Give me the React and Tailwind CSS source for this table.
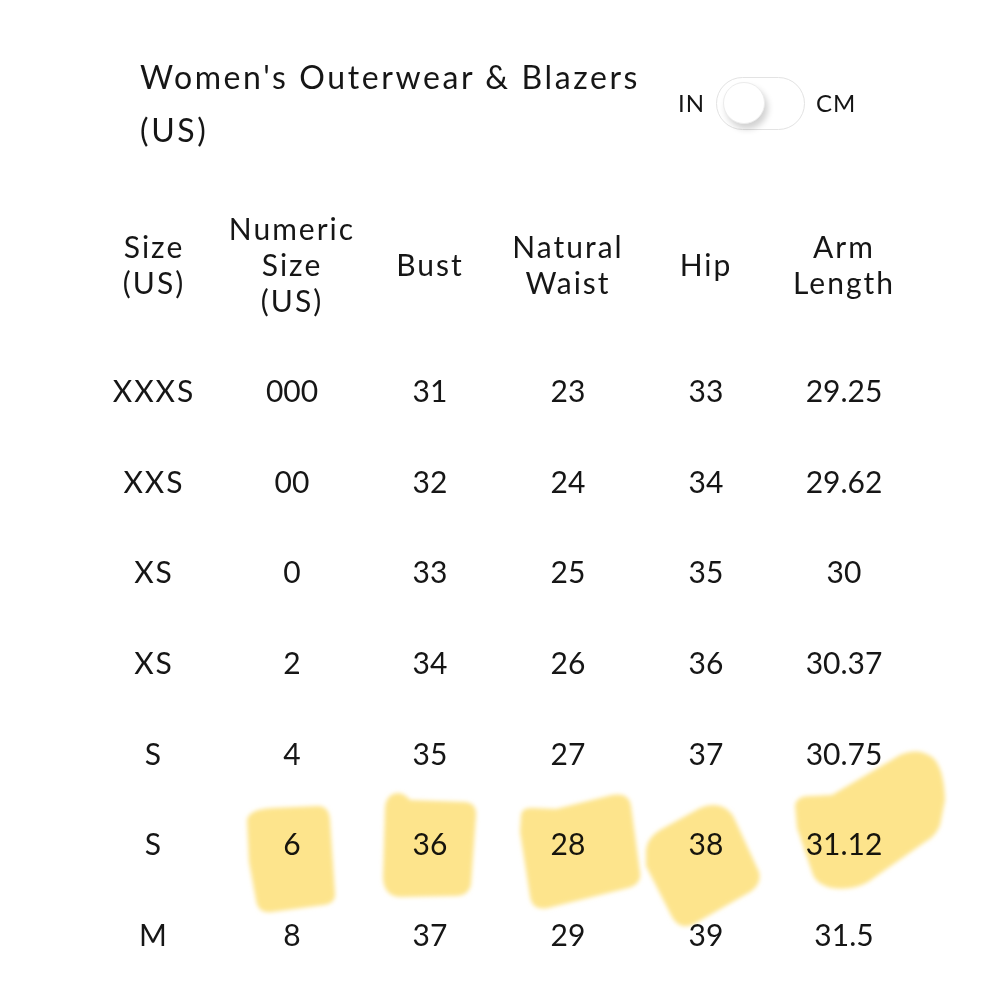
const headers = [
  ['Size', '(US)'],
  ['Numeric', 'Size', '(US)'],
  ['Bust'],
  ['Natural', 'Waist'],
  ['Hip'],
  ['Arm', 'Length'],
]

const rows = [
  ['XXXS', '000', '31', '23', '33', '29.25'],
  ['XXS', '00', '32', '24', '34', '29.62'],
  ['XS', '0', '33', '25', '35', '30'],
  ['XS', '2', '34', '26', '36', '30.37'],
  ['S', '4', '35', '27', '37', '30.75'],
  ['S', '6', '36', '28', '38', '31.12'],
  ['M', '8', '37', '29', '39', '31.5'],
]

// hand-drawn marker strokes over the "S / 6" row
const marks = [
  'M247,820 Q249,809 272,808 L318,806 Q329,806 330,820 L335,893 Q336,903 324,905 L272,912 Q258,914 256,900 L249,862 Z',
  'M385,808 Q386,794 398,793 Q404,793 410,800 L465,802 Q477,803 476,816 L471,884 Q469,896 455,896 L400,897 Q384,896 383,878 Z',
  'M521,815 Q522,807 533,808 L556,809 L612,795 Q629,792 631,806 L640,872 Q642,884 628,888 L548,908 Q532,911 530,896 L520,832 Z',
  'M646,850 Q647,838 660,830 L700,808 Q714,802 725,808 Q732,812 736,822 L759,872 Q762,884 750,892 L694,924 Q680,931 672,917 L646,866 Z',
  'M795,805 Q797,795 812,796 L832,795 L900,755 Q918,747 932,757 Q944,767 945,800 L940,825 Q936,836 925,842 L868,882 Q852,891 832,888 Q815,884 812,872 L797,828 Z',
]

const Toggle = () => (
  <div className="flex items-center">
    <span className="text-[24px] leading-none tracking-[1px] text-[#151515]">IN</span>
    <div className="ml-[11px] flex h-[53px] w-[89px] items-center rounded-full border border-[#e3e3e3] bg-white pl-[6px]">
      <div className="h-[42px] w-[42px] rounded-full border border-[#ececec] bg-white shadow-[3px_5px_6px_rgba(0,0,0,0.18)]" />
    </div>
    <span className="ml-[11px] text-[24px] leading-none tracking-[1px] text-[#151515]">CM</span>
  </div>
)

const App = () => {
  return (
    <div className="relative h-[1000px] w-[1000px] overflow-hidden bg-white font-['Lato','Noto_Sans',sans-serif] text-[#161616]">
      <header className="flex items-center pl-[140px] pt-[50px]">
        <h1 className="w-[538px] text-[32px] font-normal leading-[53px] tracking-[2.6px]">
          Women's Outerwear &amp; Blazers
          <br />
          (US)
        </h1>
        <Toggle />
      </header>

      <div className="ml-[85px] mt-[54px] w-[828px]">
        <div className="grid h-[108px] grid-cols-6">
          {headers.map((lines, i) => (
            <div
              key={i}
              className="flex flex-col items-center justify-center text-[30px] leading-[36px] tracking-[2px]"
            >
              {lines.map((line) => (
                <span key={line}>{line}</span>
              ))}
            </div>
          ))}
        </div>

        <div className="pt-[27px]">
          {rows.map((row, r) => (
            <div key={r} className="grid h-[90.7px] grid-cols-6 items-center text-[30px]">
              {row.map((cell, c) => (
                <span key={c} className={c === 0 ? 'text-center tracking-[2px]' : 'text-center'}>
                  {cell}
                </span>
              ))}
            </div>
          ))}
        </div>
      </div>

      <svg
        className="pointer-events-none absolute left-0 top-0 mix-blend-multiply"
        width="1000"
        height="1000"
        viewBox="0 0 1000 1000"
      >
        <defs>
          <filter id="soft" x="-10%" y="-10%" width="120%" height="120%">
            <feGaussianBlur stdDeviation="2.2" />
          </filter>
        </defs>
        {marks.map((d, i) => (
          <path key={i} d={d} fill="#fde48c" filter="url(#soft)" />
        ))}
      </svg>
    </div>
  )
}

export default App
